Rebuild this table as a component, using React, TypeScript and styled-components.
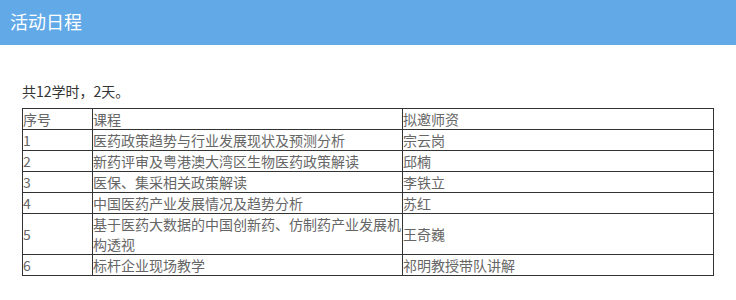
import React from "react";
import styled, { createGlobalStyle } from "styled-components";

const Global = createGlobalStyle`
  body {
    margin: 0;
    background: #fff;
    font-family: "Microsoft YaHei", "Noto Sans CJK SC", sans-serif;
  }
`;

const Header = styled.div`
  height: 45px;
  background: #62a9e8;
  color: #fff;
  font-size: 18px;
  line-height: 42px;
  padding-left: 10px;
`;

const Content = styled.div`
  padding: 36px 22px 0 22px;
`;

const Summary = styled.p`
  margin: 0 0 7px 0;
  font-size: 14px;
  line-height: 20px;
  color: #333;
`;

const Table = styled.table`
  border-collapse: collapse;
  width: 692px;
  table-layout: fixed;
  font-size: 14px;
  line-height: 20px;
  color: #666;
`;

const Cell = styled.td<{ $w?: number }>`
  border: 1px solid #333;
  padding: 0 1px 0 0;
  vertical-align: middle;
  width: ${(p) => (p.$w ? `${p.$w}px` : "auto")};
  word-break: break-all;
`;

const rows: [string, string, string][] = [
  ["序号", "课程", "拟邀师资"],
  ["1", "医药政策趋势与行业发展现状及预测分析", "宗云岗"],
  ["2", "新药评审及粤港澳大湾区生物医药政策解读", "邱楠"],
  ["3", "医保、集采相关政策解读", "李铁立"],
  ["4", "中国医药产业发展情况及趋势分析", "苏红"],
  ["5", "基于医药大数据的中国创新药、仿制药产业发展机构透视", "王奇巍"],
  ["6", "标杆企业现场教学", "祁明教授带队讲解"],
];

export default function App() {
  return (
    <>
      <Global />
      <Header>活动日程</Header>
      <Content>
        <Summary>共12学时，2天。</Summary>
        <Table>
          <tbody>
            {rows.map((r, i) => (
              <tr key={i}>
                <Cell $w={i === 0 ? 68 : undefined}>{r[0]}</Cell>
                <Cell $w={i === 0 ? 308 : undefined}>{r[1]}</Cell>
                <Cell>{r[2]}</Cell>
              </tr>
            ))}
          </tbody>
        </Table>
      </Content>
    </>
  );
}
